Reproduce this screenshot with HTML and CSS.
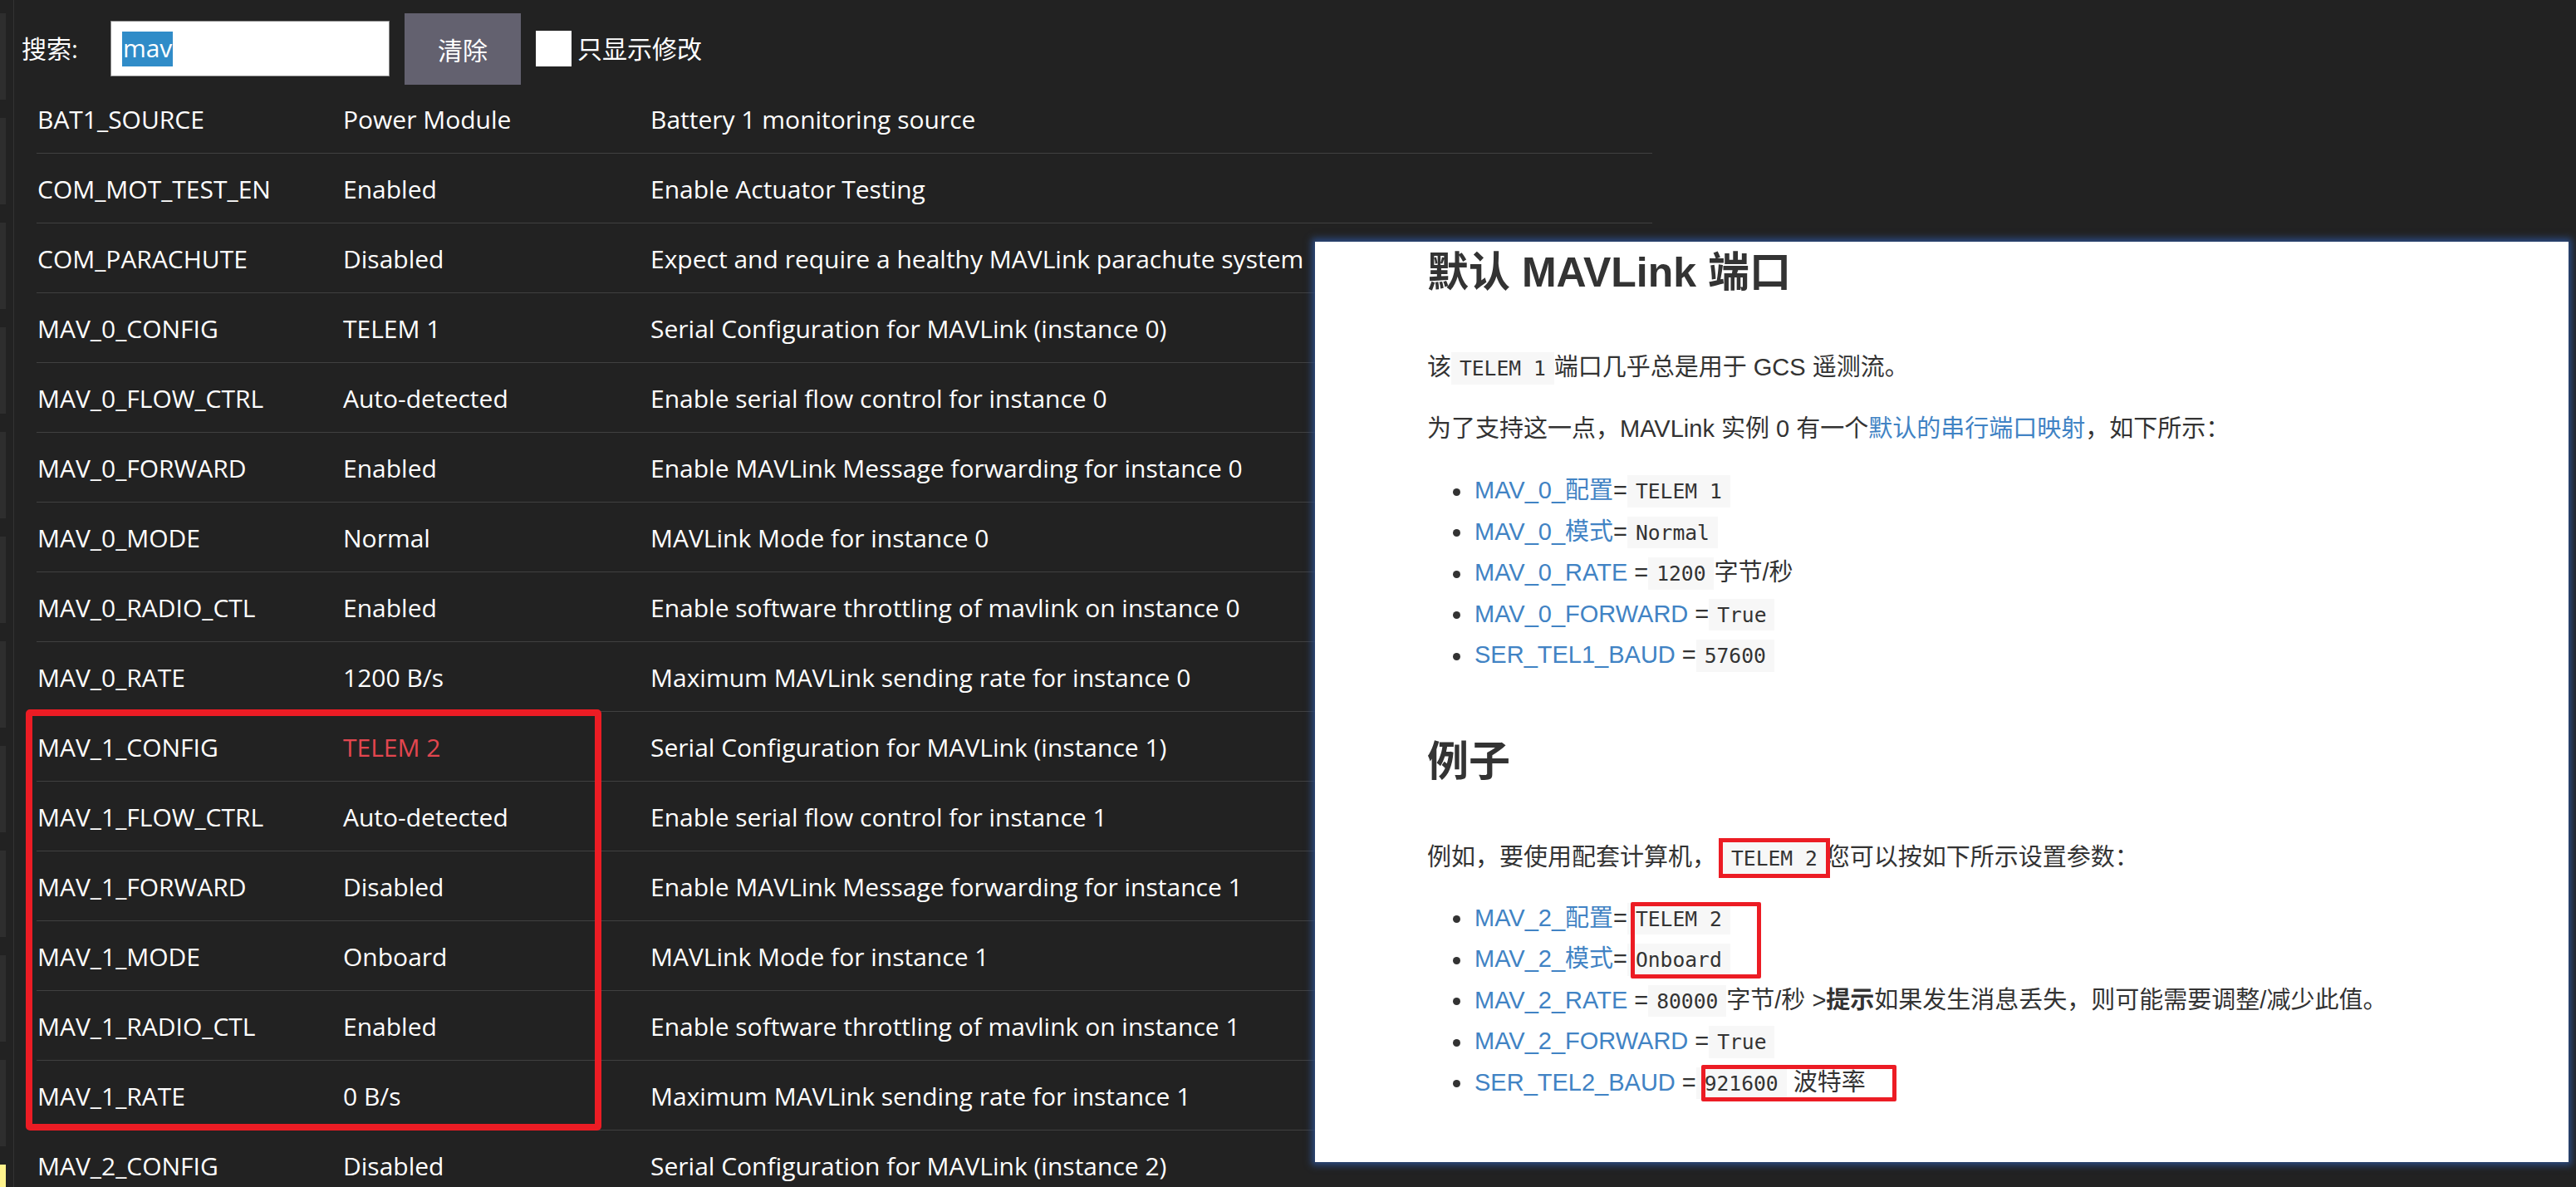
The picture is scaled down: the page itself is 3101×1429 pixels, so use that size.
FILE: index.html
```html
<!DOCTYPE html>
<html lang="zh-CN">
<head>
<meta charset="utf-8">
<title>参数</title>
<link rel="stylesheet" href="styles.css">
</head>
<body>
<div class="app">
  <aside class="sidebar">
    <div class="tab"></div><div class="tab"></div><div class="tab"></div><div class="tab"></div>
    <div class="tab"></div><div class="tab"></div><div class="tab"></div><div class="tab"></div>
    <div class="tab"></div><div class="tab"></div><div class="tab"></div><div class="tab tab-active"></div>
  </aside>
  <main class="main">
    <div class="toolbar">
      <span class="label">搜索:</span>
      <div class="search"><span class="sel">mav</span></div>
      <div class="btn">清除</div>
      <div class="check"></div>
      <span class="label check-label">只显示修改</span>
    </div>
    <div class="table">
      <div class="row"><span class="c-name">BAT1_SOURCE</span><span class="c-val">Power Module</span><span class="c-desc">Battery 1 monitoring source</span></div>
      <div class="row"><span class="c-name">COM_MOT_TEST_EN</span><span class="c-val">Enabled</span><span class="c-desc">Enable Actuator Testing</span></div>
      <div class="row"><span class="c-name">COM_PARACHUTE</span><span class="c-val">Disabled</span><span class="c-desc">Expect and require a healthy MAVLink parachute system</span></div>
      <div class="row"><span class="c-name">MAV_0_CONFIG</span><span class="c-val">TELEM 1</span><span class="c-desc">Serial Configuration for MAVLink (instance 0)</span></div>
      <div class="row"><span class="c-name">MAV_0_FLOW_CTRL</span><span class="c-val">Auto-detected</span><span class="c-desc">Enable serial flow control for instance 0</span></div>
      <div class="row"><span class="c-name">MAV_0_FORWARD</span><span class="c-val">Enabled</span><span class="c-desc">Enable MAVLink Message forwarding for instance 0</span></div>
      <div class="row"><span class="c-name">MAV_0_MODE</span><span class="c-val">Normal</span><span class="c-desc">MAVLink Mode for instance 0</span></div>
      <div class="row"><span class="c-name">MAV_0_RADIO_CTL</span><span class="c-val">Enabled</span><span class="c-desc">Enable software throttling of mavlink on instance 0</span></div>
      <div class="row"><span class="c-name">MAV_0_RATE</span><span class="c-val">1200 B/s</span><span class="c-desc">Maximum MAVLink sending rate for instance 0</span></div>
      <div class="row"><span class="c-name">MAV_1_CONFIG</span><span class="c-val changed">TELEM 2</span><span class="c-desc">Serial Configuration for MAVLink (instance 1)</span></div>
      <div class="row"><span class="c-name">MAV_1_FLOW_CTRL</span><span class="c-val">Auto-detected</span><span class="c-desc">Enable serial flow control for instance 1</span></div>
      <div class="row"><span class="c-name">MAV_1_FORWARD</span><span class="c-val">Disabled</span><span class="c-desc">Enable MAVLink Message forwarding for instance 1</span></div>
      <div class="row"><span class="c-name">MAV_1_MODE</span><span class="c-val">Onboard</span><span class="c-desc">MAVLink Mode for instance 1</span></div>
      <div class="row"><span class="c-name">MAV_1_RADIO_CTL</span><span class="c-val">Enabled</span><span class="c-desc">Enable software throttling of mavlink on instance 1</span></div>
      <div class="row"><span class="c-name">MAV_1_RATE</span><span class="c-val">0 B/s</span><span class="c-desc">Maximum MAVLink sending rate for instance 1</span></div>
      <div class="row"><span class="c-name">MAV_2_CONFIG</span><span class="c-val">Disabled</span><span class="c-desc">Serial Configuration for MAVLink (instance 2)</span></div>
    </div>
  </main>
</div>

<div class="mark mark-left"></div>

<section class="panel">
  <h2 class="h-first">默认 MAVLink 端口</h2>
  <p class="p-a">该<code>TELEM 1</code>端口几乎总是用于 GCS 遥测流。</p>
  <p class="p-b">为了支持这一点，MAVLink 实例 0 有一个<a>默认的串行端口映射</a>，如下所示：</p>
  <ul class="list list-a">
    <li><a>MAV_0_配置</a>=<code>TELEM 1</code></li>
    <li><a>MAV_0_模式</a>=<code>Normal</code></li>
    <li><a>MAV_0_RATE</a> =<code>1200</code>字节/秒</li>
    <li><a>MAV_0_FORWARD</a> =<code>True</code></li>
    <li><a>SER_TEL1_BAUD</a> =<code>57600</code></li>
  </ul>
  <h2 class="h-second">例子</h2>
  <p class="p-c">例如，要使用配套计算机， <code class="boxed">TELEM 2</code>您可以按如下所示设置参数：</p>
  <ul class="list list-b">
    <li><a>MAV_2_配置</a>=<code>TELEM 2</code></li>
    <li><a>MAV_2_模式</a>=<code>Onboard</code></li>
    <li><a>MAV_2_RATE</a> =<code>80000</code>字节/秒 &gt;<b>提示</b>如果发生消息丢失，则可能需要调整/减少此值。</li>
    <li><a>MAV_2_FORWARD</a> =<code>True</code></li>
    <li><a>SER_TEL2_BAUD</a> =<code>921600</code> 波特率</li>
  </ul>
  <div class="mark mark-pair"></div>
  <div class="mark mark-baud"></div>
</section>
</body>
</html>
```

FILE: styles.css
```css
html, body {
  margin: 0;
  padding: 0;
  height: 1429px;
  overflow: hidden;
  background: #222222;
}

body {
  position: relative;
  font-family: "Open Sans", "Noto Sans CJK SC", sans-serif;
  color: #ffffff;
}

.app {
  display: flex;
  height: 1429px;
}

/* left tab strip */
.sidebar {
  width: 16px;
  flex: none;
  border-right: 1px solid #333333;
  display: flex;
  flex-direction: column;
  gap: 22px;
  padding-top: 16px;
  box-sizing: content-box;
}

.tab {
  width: 7px;
  height: 104px;
  flex: none;
  background: #2e2e2e;
}

.tab-active {
  background: #fff38c;
}

.main {
  flex: 1;
  padding-left: 9px;
}

/* toolbar */
.toolbar {
  height: 101px;
  display: flex;
  align-items: center;
  padding-top: 16px;
  box-sizing: border-box;
  font-size: 30px;
}

.label {
  line-height: 86px;
}

.search {
  width: 336px;
  height: 67px;
  margin-left: 39px;
  background: #ffffff;
  border: 1px solid #8c8c8c;
  box-sizing: border-box;
  display: flex;
  align-items: center;
  padding-left: 13px;
}

.sel {
  background: #308cc8;
  color: #ffffff;
  height: 42px;
  line-height: 40px;
  font-size: 30px;
  padding: 0 1px;
}

.btn {
  width: 140px;
  height: 86px;
  margin-left: 18px;
  background: #63616f;
  color: #ffffff;
  display: flex;
  align-items: center;
  justify-content: center;
}

.check {
  width: 43px;
  height: 43px;
  margin-left: 18px;
  background: #ffffff;
}

.check-label {
  margin-left: 7px;
}

/* parameter table */
.table {
  margin-left: 18px;
  width: 1945px;
}

.row {
  display: flex;
  align-items: center;
  height: 84px;
  padding-top: 2px;
  border-bottom: 1px solid #404040;
  box-sizing: border-box;
  font-size: 30px;
  white-space: nowrap;
}

.c-name {
  width: 369px;
  padding-left: 1px;
  box-sizing: border-box;
}

.c-val {
  width: 370px;
}

.changed {
  color: #e2464f;
}

/* annotation boxes */
.mark {
  position: absolute;
  border: 5px solid #ec1c24;
  box-sizing: border-box;
  border-radius: 2px;
  pointer-events: none;
}

.mark-left {
  left: 31px;
  top: 854px;
  width: 693px;
  height: 507px;
  border-width: 8px;
  border-radius: 5px;
}

/* document panel */
.panel {
  position: absolute;
  left: 1583px;
  top: 291px;
  width: 1509px;
  height: 1108px;
  box-sizing: border-box;
  padding: 7px 0 0 135px;
  background: #ffffff;
  box-shadow: 0 0 8px 4px #2b4a80;
  overflow: hidden;
  font-family: "Liberation Sans", "Noto Sans CJK SC", sans-serif;
  font-size: 29px;
  color: #333333;
}

.panel h2 {
  margin: 0;
  height: 60px;
  font-size: 50px;
  line-height: 60px;
  font-weight: 700;
}

.panel p {
  margin: 0;
  height: 50px;
  line-height: 50px;
  white-space: nowrap;
}

.panel a {
  color: #4183c4;
}

.panel b {
  font-weight: 700;
}

.panel code {
  font-family: "DejaVu Sans Mono", "Liberation Mono", monospace;
  font-size: 0.85em;
  line-height: 1;
  background: #f7f7f7;
  padding: 0.2em 0;
}

.panel code::before,
.panel code::after {
  content: "\00a0";
  letter-spacing: -0.2em;
}

.p-a { margin-top: 59px !important; }
.p-b { margin-top: 24px !important; }
.p-c { margin-top: 60px !important; }

.h-second { margin-top: 73px !important; }

.list {
  list-style: none;
  margin: 25px 0 0;
  padding: 0 0 0 57px;
}

.list-b { margin-top: 24px; }

.list li {
  height: 49.5px;
  line-height: 49.5px;
  white-space: nowrap;
}

.list li::before {
  content: "";
  display: inline-block;
  width: 9px;
  height: 9px;
  border-radius: 50%;
  background: #333333;
  margin-left: -26px;
  margin-right: 17px;
  vertical-align: middle;
}

.boxed {
  outline: 5px solid #ec1c24;
}

.mark-pair {
  left: 380px;
  top: 795px;
  width: 157px;
  height: 92px;
}

.mark-baud {
  left: 465px;
  top: 991px;
  width: 235px;
  height: 44px;
}
```
